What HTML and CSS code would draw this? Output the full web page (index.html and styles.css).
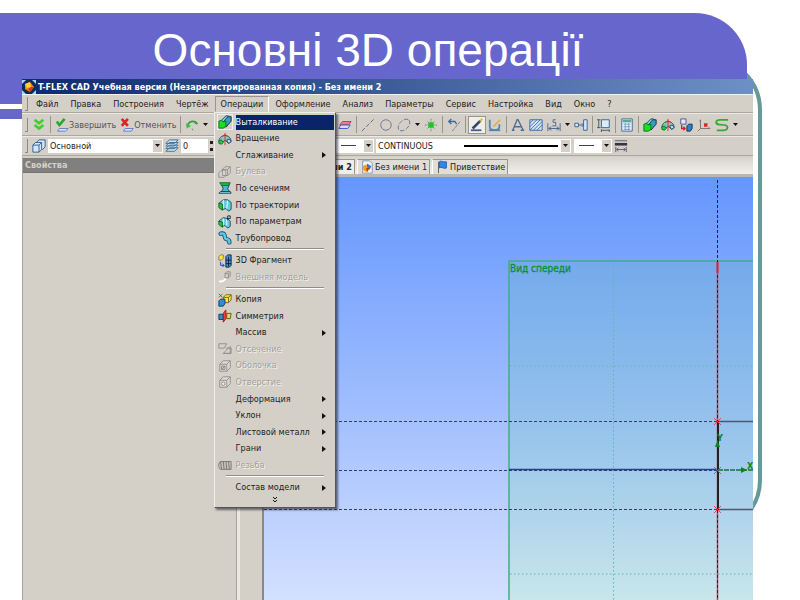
FILE: index.html
```html
<!DOCTYPE html>
<html lang="uk">
<head>
<meta charset="utf-8">
<title>Основні 3D операції</title>
<link rel="stylesheet" href="styles.css">
</head>
<body>
<svg class="defs" aria-hidden="true">
  <symbol id="extrude" viewBox="0 0 16 16"><path d="M6 7 11 2h4v5l-6 7" fill="#36a0b8" stroke="#123" stroke-width="1"/><path d="M4 6 9 1h3L6 8z" fill="#7fd4d8" stroke="#164050"/><path d="M1 7l3-1 2 2 3-1v6l-3 2H1z" fill="#1de01d" stroke="#0a6a20"/></symbol>
  <symbol id="revolve" viewBox="0 0 16 16"><path d="M1 11c0-4 3-7 7-7s7 3 7 7l-3 2-3-3H7l-3 3z" fill="#8fc4b8" stroke="#245"/><path d="M1 10l3-1 2 3-2 2-3-1z" fill="#1fd42a" stroke="#164"/><path d="M10 9l3-1 2 3-3 2z" fill="#cde" stroke="#246"/><path d="M8 1v14M5 5l3-2 3 2" stroke="#e02828" fill="none"/></symbol>
  <symbol id="caret" viewBox="0 0 6 4"><path d="M0 0h5L2.500 3z" fill="#111"/></symbol>
  <symbol id="box" viewBox="0 0 16 16"><path d="M2 6l4-4h8v8l-4 4H2zM2 6h8v8M10 6l4-4" fill="#dcd9d3" stroke="#8d8b88"/></symbol>
</svg>

<div class="slide">
  <div class="frame"></div>
  <div class="band"></div>
  <header class="heading"><h1>Основні 3D операції</h1></header>

  <main class="app">
    <div class="titlebar">
      <svg viewBox="0 0 14 14"><path d="M0 0h14v14H0z" fill="#9fd8f0"/><path d="M0 4 4 0h6l4 4v6l-4 4H4l-4-4z" fill="#102a58"/><path d="M3 4l5-2 4 5-4 5-5-3z" fill="#f08a18"/><path d="M3 4l5-2 1 5-4 1z" fill="#ffd23c"/><path d="M9 7l3 0-4 5-2-3z" fill="#d83a10"/></svg>
      <span>T-FLEX CAD Учебная версия (Незарегистрированная копия) - Без имени 2</span>
    </div>

    <nav class="menubar">
      <i class="grip"></i>
      <button>Файл</button><button>Правка</button><button>Построения</button><button>Чертёж</button>
      <div class="menu-root">
        <button class="open">Операции</button>
        <div class="dropdown">
          <div class="list">
            <button class="item current"><svg class="raised"><use href="#extrude"/></svg><span>Выталкивание</span></button>
            <button class="item"><svg><use href="#revolve"/></svg><span>Вращение</span></button>
            <button class="item sub"><i></i><span>Сглаживание</span></button>
            <button class="item" disabled><svg viewBox="0 0 16 16"><path d="M5 5l3-3h6v7l-3 3H5zM1 9l3-3h5v6l-2 2H1z" fill="#d9d6d0" stroke="#8d8b88"/><path d="M5 5h6v7M11 5l3-3" fill="none" stroke="#8d8b88"/></svg><span>Булева</span></button>
            <button class="item"><svg viewBox="0 0 16 16"><path d="M4 4h9l-2 5 3 4H3l3-4z" fill="#49b8d0" stroke="#123c50"/><path d="M2 2h12l-2 3H4z" fill="#18c848" stroke="#0a5a28"/><path d="M3 12h11l1 2H1z" fill="#8fdcea" stroke="#123c50"/></svg><span>По сечениям</span></button>
            <button class="item"><svg viewBox="0 0 16 16"><path d="M1 6l5-4 5 0 4 3v8l-3 2-3-3-3 1z" fill="#6cc9de" stroke="#12465c"/><path d="M6 2v10M11 3l-1 9" stroke="#fff" fill="none"/><path d="M1 6l4 1v7l-4-3z" fill="#1cd02c" stroke="#0a5a28"/></svg><span>По траектории</span></button>
            <button class="item"><svg viewBox="0 0 16 16"><path d="M1 7l5-4 5 1 3 3v6l-3 2-3-3-3 1z" fill="#6cc9de" stroke="#12465c"/><path d="M6 4v8M10 5v7" stroke="#fff"/><path d="M1 7l4 1v6l-4-3z" fill="#1cd02c" stroke="#0a5a28"/><path d="M11 6V1h3v3h-3" fill="none" stroke="#123"/></svg><span>По параметрам</span></button>
            <button class="item"><svg viewBox="0 0 16 16"><path d="M3 3c7-1 3 4 6 6 2 1 4 0 4 4" fill="none" stroke="#124f70" stroke-width="5" stroke-linecap="round"/><path d="M3 3c7-1 3 4 6 6 2 1 4 0 4 4" fill="none" stroke="#5fc8e4" stroke-width="3" stroke-linecap="round"/></svg><span>Трубопровод</span></button>
            <hr>
            <button class="item"><svg viewBox="0 0 16 16"><path d="M1 3l2-2h3v4l-2 2H1z" fill="#ffe638" stroke="#775"/><path d="M3 9v4h4M5 11l2 2-2 2" fill="none" stroke="#1830b8"/><path d="M9 3l2-2h4v12l-2 2H9z" fill="#3a9bd0" stroke="#113"/><path d="M9 7h6M9 11h6M12 3v11" stroke="#113"/></svg><span>3D Фрагмент</span></button>
            <button class="item" disabled><svg viewBox="0 0 16 16"><path d="M8 4l2-2h4v5l-2 2H8zM8 4h4v5" fill="#d0cdc8" stroke="#8d8b88"/><path d="M1 13h4l4-3" stroke="#fff" stroke-width="2" fill="none"/></svg><span>Внешняя модель</span></button>
            <hr>
            <button class="item"><svg viewBox="0 0 16 16"><path d="M6 5l3-3h6v6l-3 3H6z" fill="#ffe93a" stroke="#665c10"/><path d="M6 5h6v6M12 5l3-3" fill="none" stroke="#665c10"/><path d="M1 9l2-2h5v5l-2 3H1z" fill="#2e8fcc" stroke="#0d3560"/><path d="M1 1l4 4M1 5l4-4" stroke="#e02020"/></svg><span>Копия</span></button>
            <button class="item"><svg viewBox="0 0 16 16"><path d="M1 6h5v6H1z" fill="#2e8fcc" stroke="#0d3560"/><path d="M10 5h5l-1 6h-4z" fill="#e6d858" stroke="#4c5510"/><path d="M6 5l3-4v10l-3 4z" fill="#f04040" stroke="#a01010"/></svg><span>Симметрия</span></button>
            <button class="item sub"><i></i><span>Массив</span></button>
            <button class="item" disabled><svg viewBox="0 0 16 16"><path d="M1 2h9l-3 5H1zM6 13l8-8v8zM9 7h6v6H6" fill="#d5d2cc" stroke="#8d8b88"/></svg><span>Отсечение</span></button>
            <button class="item" disabled><svg viewBox="0 0 16 16"><use href="#box"/><path d="M4 8h4v4H4zM4 12l4-4" fill="#c4c1bc" stroke="#8d8b88"/></svg><span>Оболочка</span></button>
            <button class="item" disabled><svg viewBox="0 0 16 16"><use href="#box"/><circle cx="6" cy="10" r="2" fill="#eee" stroke="#8d8b88"/></svg><span>Отверстие</span></button>
            <button class="item sub"><i></i><span>Деформация</span></button>
            <button class="item sub"><i></i><span>Уклон</span></button>
            <button class="item sub"><i></i><span>Листовой металл</span></button>
            <button class="item sub"><i></i><span>Грани</span></button>
            <button class="item" disabled><svg viewBox="0 0 16 16"><path d="M3 4h12v9H3c-3-1-3-8 0-9z" fill="#c9c6c0" stroke="#77756f"/><path d="M3 4l1 9M6 4l1 9M9 4l1 9M12 4l1 9" stroke="#6f6d68"/></svg><span>Резьба</span></button>
            <hr>
            <button class="item sub"><i></i><span>Состав модели</span></button>
          </div>
          <button class="more" aria-label="Ещё"><svg viewBox="0 0 6 8"><path d="M1 1l2 2 2-2M1 4l2 2 2-2" fill="none" stroke="#111"/></svg></button>
        </div>
      </div>
      <button>Оформление</button><button>Анализ</button><button>Параметры</button><button>Сервис</button><button>Настройка</button><button>Вид</button><button>Окно</button><button>?</button>
    </nav>

    <div class="toolbar">
      <div class="lead">
        <i class="grip"></i>
        <button class="tool"><svg viewBox="0 0 16 16"><path d="M3 2l5 4 5-4M3 8l5 4 5-4" fill="none" stroke="#3fd02f" stroke-width="3"/></svg></button>
        <i class="sep"></i>
        <button class="wide"><svg viewBox="0 0 16 16"><path d="M5 12h10l-3 3H3z" fill="#dbe6fb" stroke="#5873c8"/><path d="M2 4l3 4 6-7" fill="none" stroke="#27a82a" stroke-width="3"/></svg>Завершить</button>
        <button class="wide"><svg viewBox="0 0 16 16"><path d="M6 12h9l-2 3H4z" fill="#dbe6fb" stroke="#5873c8"/><path d="M2 1l7 8M9 1 2 9" fill="none" stroke="#d82626" stroke-width="3"/></svg>Отменить</button>
        <i class="sep"></i>
        <button class="tool"><svg viewBox="0 0 16 16"><path d="M3 8c3-6 9-5 11-1M14 7l-3-2" fill="none" stroke="#3a9c3e" stroke-width="2"/><path d="M1 6l1 6 5-3z" fill="#3cc044"/><path d="M8 12l1 2" stroke="#3a9c3e"/></svg></button>
        <button class="drop"><svg><use href="#caret"/></svg></button>
      </div>
      <button class="tool"><svg viewBox="0 0 16 16"><path d="M5 4h10l-3 4H2z" fill="#e8808c" stroke="#c83040"/><path d="M3 8h11l-3 4H1z" fill="#cfe0ff" stroke="#2a50c0"/></svg></button>
      <i class="sep"></i>
      <button class="tool"><svg viewBox="0 0 16 16"><path d="M1 15 15 1" stroke="#55647c" stroke-dasharray="5 2"/></svg></button>
      <button class="tool"><svg viewBox="0 0 16 16"><circle cx="8" cy="8" r="6" fill="none" stroke="#65748c"/></svg></button>
      <button class="tool"><svg viewBox="0 0 16 16"><ellipse cx="8" cy="8" rx="8" ry="5" transform="rotate(-45 8 8)" fill="none" stroke="#65748c" stroke-dasharray="5 2"/></svg></button>
      <button class="drop"><svg><use href="#caret"/></svg></button>
      <button class="tool"><svg viewBox="0 0 16 16"><path d="M1 8h14M8 1v14" stroke="#4a9a58" stroke-dasharray="2 1"/><path d="M4 4l8 8M12 4l-8 8" stroke="#3aa848"/><path d="M5 5h6v6H5z" fill="#1cc42a"/></svg></button>
      <i class="sep"></i>
      <button class="tool"><svg viewBox="0 0 16 16"><path d="M2 4h7l2 3M5 1 2 4l3 3" fill="none" stroke="#41669c" stroke-width="1.500"/><path d="M6 15 15 4" stroke="#6a7c94" stroke-dasharray="4 1"/></svg></button>
      <i class="sep"></i>
      <button class="tool pressed"><svg viewBox="0 0 16 16"><path d="M1 13h12v2H1z" fill="#3c5d96"/><path d="M3 12 12 3" stroke="#30466f" stroke-width="3"/><path d="M11 4l3-3" stroke="#d3b13c" stroke-width="2"/></svg></button>
      <button class="tool"><svg viewBox="0 0 16 16"><path d="M2 2v8c0 5 11 5 11 0V7" fill="none" stroke="#4f86b4" stroke-width="2"/><path d="M1 14h13" stroke="#4f86b4" stroke-width="2"/><path d="M6 10l8-8" stroke="#dcae58" stroke-width="2"/></svg></button>
      <i class="sep"></i>
      <button class="tool"><svg viewBox="0 0 16 16"><path d="M2 14 7 2h1l6 12M4 10h8M1 14h3M11 14h4" fill="none" stroke="#4e6b92" stroke-width="1.500"/></svg></button>
      <button class="tool"><svg viewBox="0 0 16 16"><path d="M1 2h14v12H1z" fill="#d7e6f6" stroke="#2e62a8"/><path d="M1 6l4-4M1 10l8-8M1 14 13 2M5 14 15 4M9 14l6-6" stroke="#2e62a8"/></svg></button>
      <button class="tool"><svg viewBox="0 0 16 16"><path d="M1 6v9M15 6v9M2 12h12M5 10l-3 2 3 2M11 10l3 2-3 2M10 2H7v3h3v4H6" fill="none" stroke="#41608c"/></svg></button>
      <button class="drop"><svg><use href="#caret"/></svg></button>
      <button class="tool"><svg viewBox="0 0 16 16"><path d="M1 6h4v4H1zM5 8h6M9 6l2 2-2 2M11 2h4v12h-4z" fill="#d9ecfa" stroke="#2b5794"/></svg></button>
      <i class="sep"></i>
      <button class="tool"><svg viewBox="0 0 16 16"><path d="M5 2h9v9H5z" fill="#d9ecfa" stroke="#2b5794"/><path d="M2 2v9M0 2h4M0 11h4M5 13v3M14 13v3M5 14h9" stroke="#38506c"/></svg></button>
      <i class="sep"></i>
      <button class="tool"><svg viewBox="0 0 16 16"><path d="M2 1h12v14H2z" fill="#eaf4fc" stroke="#38618e"/><path d="M3 2h10v3H3z" fill="#5aa892"/><path d="M4 7h8M4 10h8M4 13h8M6 6v8M10 6v8" stroke="#6f95bd"/></svg></button>
      <i class="sep"></i>
      <button class="tool"><svg><use href="#extrude"/></svg></button>
      <button class="tool"><svg><use href="#revolve"/></svg></button>
      <button class="tool"><svg viewBox="0 0 16 16"><path d="M2 1h6v6H2z" fill="#d9ecfa" stroke="#2b5794"/><path d="M3 8v4h4M5 10l2 2-2 2" fill="none" stroke="#e02020" stroke-width="1.500"/><path d="M9 9l2-2h4v5l-2 3H9z" fill="#2e7fc4" stroke="#0d2d58"/></svg></button>
      <button class="tool"><svg viewBox="0 0 16 16"><path d="M4 2v10h11M4 12l-3 3M4 2 3 4M15 12l-2-1" fill="none" stroke="#7a6a6a"/><path d="M8 6h4v4H8z" fill="#d82828"/></svg></button>
      <button class="tool"><svg viewBox="0 0 16 16"><path d="M15 2H6C0 2 0 7 5 7.500l6 .5c5 1 4 6-1 6H2" fill="none" stroke="#36a836" stroke-width="2"/></svg></button>
      <button class="drop"><svg><use href="#caret"/></svg></button>
    </div>

    <div class="toolbar props">
      <div class="lead">
        <i class="grip"></i>
        <button class="tool"><svg viewBox="0 0 16 16"><path d="M5 4l3-3h7v8l-3 3H5z" fill="#d3e8f8" stroke="#29548a"/><path d="M1 7l3-3h7v8l-3 3H1z" fill="#d3e8f8" stroke="#29548a"/><path d="M1 7h7v8M8 7l3-3" fill="none" stroke="#29548a"/></svg></button>
        <label class="combo level"><select aria-label="Уровень"><option>Основной</option></select><i class="arrow"><svg><use href="#caret"/></svg></i></label>
        <button class="tool"><svg viewBox="0 0 16 16"><path d="M1 14l4-4h10l-4 4zM1 11l4-4h10l-4 4zM1 8l4-4h10l-4 4zM1 5l4-4h10l-4 4z" fill="#c9e2f2" stroke="#386890"/></svg></button>
        <input class="num" type="text" value="0" aria-label="Слой">
        <i class="spin"></i>
      </div>
      <label class="combo short"><select aria-label="Начало линии"><option></option></select><i class="thin"></i><i class="arrow"><svg><use href="#caret"/></svg></i></label>
      <label class="combo line"><select aria-label="Тип линии"><option>CONTINUOUS</option></select><i class="thick"></i><i class="arrow"><svg><use href="#caret"/></svg></i></label>
      <label class="combo short"><select aria-label="Конец линии"><option></option></select><i class="thin"></i><i class="arrow"><svg><use href="#caret"/></svg></i></label>
      <button class="tool"><svg viewBox="0 0 16 16"><path d="M1 2h14" stroke="#556"/><path d="M1 6h14" stroke="#334" stroke-width="3"/><path d="M2 9v6M14 9v6M3 12h10M5 10l-2 2 2 2M11 10l2 2-2 2" fill="none" stroke="#556"/></svg></button>
    </div>

    <div class="work">
      <aside class="panel"><h2>Свойства</h2></aside>
      <div class="gutter"></div>
      <section class="doc">
        <div class="tabs">
          <button class="tab active">Без имени 2</button>
          <button class="tab"><svg viewBox="0 0 16 16"><path d="M3 1h8l3 3v11H3z" fill="#eef4fb" stroke="#7a94ae"/><path d="M3 7l4-2 4 4-3 5-4-2z" fill="#f0a020"/><path d="M8 4l5 3-2 4-3-3z" fill="#3a78d8"/><path d="M7 9l4 0-3 5z" fill="#d03020"/></svg>Без имени 1</button>
          <button class="tab"><svg viewBox="0 0 16 16"><path d="M4 2v13" stroke="#555"/><path d="M5 2c2-2 4 1 8 0v7c-3 2-5-2-8 0z" fill="#2f86e8" stroke="#1758b0"/></svg>Приветствие</button>
        </div>
        <svg class="canvas" viewBox="264 177 489 423" preserveAspectRatio="xMinYMin slice">
          <defs>
            <linearGradient id="sky" x2="0" y2="1"><stop offset="0" stop-color="#6496fd"/><stop offset="1" stop-color="#d3e0ff"/></linearGradient>
            <linearGradient id="sheet" x2="0" y2="1"><stop offset="0" stop-color="#74aaec"/><stop offset=".5" stop-color="#97c4ec"/><stop offset=".8" stop-color="#b5d8eb"/><stop offset="1" stop-color="#c8e6ea"/></linearGradient>
          </defs>
          <rect x="264" y="177" width="489" height="423" fill="url(#sky)"/>
          <rect x="509" y="261" width="245" height="340" fill="url(#sheet)"/>
          <path d="M509 600V261h244" fill="none" stroke="#3faf80" stroke-width="1.500"/>
          <path d="M613.500 262v338M510 366h243M510 574h243" stroke="#5ab8a8" stroke-dasharray="1.500 2.500"/>
          <path d="M264 421.500h454M264 470.500h454M264 509.500h454" stroke="#32405f" stroke-dasharray="3 2"/>
          <path d="M509 469.500h209" stroke="#2638b8" stroke-width="1.500"/>
          <path d="M717.500 262v338" stroke="#c04858" stroke-width="1.500"/>
          <path d="M717.500 180v420" stroke="#1d2038" stroke-dasharray="3 2"/>
          <path d="M717.500 262v11" stroke="#e02038" stroke-width="2"/>
          <path d="M753 421.500h-35v88h35" fill="none" stroke="#4c5a70" stroke-width="1.500"/>
          <path d="M718 421v89" stroke="#222" stroke-width="2"/>
          <path d="M718 470h35" stroke="#157048" stroke-width="1.500" stroke-dasharray="5 1"/>
          <path d="M714 418l7 7M721 418l-7 7M714 467l7 7M721 467l-7 7M714 506l7 7M721 506l-7 7" stroke="#e04858"/>
          <path d="M715 447l2.500-7 2.500 7zM741 467l6 3-6 3z" fill="#0a8424"/>
          <text class="axis" x="717" y="441">Y</text><text class="axis" x="747" y="469">X</text>
          <text class="view" x="510" y="272">Вид спереди</text>
        </svg>
      </section>
    </div>
  </main>
</div>
</body>
</html>
```

FILE: styles.css
```css
* { box-sizing: border-box; }

body {
  margin: 0;
  background: #fff;
  color: #222;
  font: 9px/12px "DejaVu Sans Condensed", "DejaVu Sans", sans-serif;
}

button, input, select {
  margin: 0;
  padding: 0;
  border: 0;
  border-radius: 0;
  background: none;
  color: inherit;
  font: inherit;
  appearance: none;
}

button { white-space: nowrap; }
svg { display: block; flex: none; }
.defs { position: absolute; width: 0; height: 0; }

.slide {
  position: relative;
  display: flex;
  flex-direction: column;
  min-height: 100vh;
  overflow: hidden;
}

.band {
  position: absolute;
  top: 13px;
  left: 0;
  right: 53px;
  height: 106px;
  border-radius: 0 52px 0 0;
  background: linear-gradient(#6666cc 91px, #fff 91px, #fff 96px, #6666cc 96px);
  clip-path: polygon(0 0, 100% 0, 100% 70px, 50% 70px, 50% 100%, 0 100%);
}

.frame {
  position: absolute;
  top: 56px;
  right: 38px;
  width: 50%;
  height: 478px;
  border: 4px solid #669999;
  border-radius: 54px;
  clip-path: inset(14px 0 0 80%);
}

.heading {
  position: relative;
  padding: 22px 64px 1px 0;
}

h1 {
  margin: 0;
  color: #fff;
  font: 46px/56px "Liberation Sans", sans-serif;
  text-align: center;
}

.app {
  position: relative;
  flex: 1;
  display: flex;
  flex-direction: column;
  margin: 0 47px 0 22px;
  background: #d4d0c8;
}

.titlebar {
  display: flex;
  align-items: center;
  gap: 2px;
  height: 15px;
  background: linear-gradient(90deg, #0d2a6c, #6d90c4);
  color: #fff;
  font-weight: bold;
  white-space: nowrap;
}
.titlebar svg { width: 14px; height: 14px; }

.menubar {
  display: flex;
  align-items: center;
  height: 19px;
  padding: 1px 1px 0;
  border-top: 1px solid #f4f2ee;
  border-bottom: 1px solid #aaa79f;
}
.menubar > button, .open { height: 16px; padding: 0 5px; border: 1px solid transparent; }
.menubar .open { border-color: #98958e #fff #d4d0c8 #98958e; }

.grip {
  width: 3px;
  height: 14px;
  margin: 0 2px;
  border-right: 1px solid #8e8b84;
  border-bottom: 1px solid #8e8b84;
}

.menu-root { position: relative; }

.dropdown {
  position: absolute;
  z-index: 5;
  top: 16px;
  left: -1px;
  width: 122px;
  padding: 1px;
  border: 1px solid #f2f0ec;
  border-right-color: #555;
  border-bottom-color: #555;
  background: #d4d0c8;
  box-shadow: 2px 2px 2px rgba(30, 30, 40, .6);
}
.list { display: flex; flex-direction: column; height: 382px; }
.item {
  flex: 1;
  display: grid;
  grid-template-columns: 20px 1fr 12px;
  align-items: center;
  text-align: left;
}
.item svg { width: 14px; height: 14px; margin-left: 2px; }
.item span { line-height: 15px; }
.item .raised { outline: 1px solid #f0eee8; }
.current span { grid-column: 2 / 4; background: #0a246a; color: #fff; }
.sub::after {
  content: "";
  width: 4px;
  border-left: 4px solid #111;
  border-top: 3px solid transparent;
  border-bottom: 3px solid transparent;
}
.item:disabled { color: #a3a09a; text-shadow: 1px 1px #f4f2ee; }
.list hr {
  width: 98px;
  height: 2px;
  margin: 2px 8px 2px 10px;
  border: 0;
  border-top: 1px solid #908d86;
  border-bottom: 1px solid #fff;
}
.more { display: flex; justify-content: center; width: 100%; height: 10px; }
.more svg { width: 6px; height: 8px; }

.toolbar {
  display: flex;
  align-items: center;
  height: 23px;
  border-bottom: 1px solid #aaa79f;
  border-top: 1px solid #eceae5;
}
.lead { display: flex; align-items: center; width: 314px; padding-left: 1px; flex: none; }
.tool {
  display: flex;
  align-items: center;
  justify-content: center;
  width: 18px;
  height: 18px;
  flex: none;
}
.tool svg { width: 14px; height: 14px; }
.pressed { background: #f0eee9; border: 1px solid #98958e; }
.wide { display: flex; align-items: center; color: #555; padding: 0 2px; }
.wide svg { width: 14px; height: 14px; }
.sep { width: 1px; height: 17px; margin: 0 2px; background: #98958e; flex: none; }
.drop { display: flex; align-items: center; justify-content: center; width: 9px; height: 18px; flex: none; }
.drop svg, .arrow svg { width: 6px; height: 4px; }

.props { height: 20px; }
.combo { position: relative; display: block; height: 14px; background: #fff; }
.combo select { display: block; width: 100%; height: 14px; padding-left: 2px; }
.combo i { position: absolute; pointer-events: none; }
.combo .arrow {
  top: 1px;
  right: 1px;
  display: flex;
  align-items: center;
  justify-content: center;
  width: 9px;
  height: 12px;
  background: #d4d0c8;
}
.level { width: 115px; }
.short { width: 38px; }
.line { width: 195px; margin: 0 3px 0 2px; }
.thin { left: 5px; top: 6px; width: 15px; border-top: 1px solid #444; }
.thick { right: 13px; top: 6px; width: 94px; border-top: 2px solid #000; }
.num { width: 27px; height: 14px; padding-left: 2px; background: #fff; }
.spin {
  width: 6px;
  height: 10px;
  margin-left: 2px;
  background: linear-gradient(#222 3px, transparent 3px, transparent 7px, #222 7px) no-repeat 0 0 / 3px 10px;
}

.work { flex: 1; display: flex; margin-top: 1px; }
.panel { width: 215px; flex: none; border-left: 1px solid #a5a29b; border-right: 1px solid #a5a29b; }
.panel h2 {
  margin: 1px 0 0;
  padding-left: 2px;
  height: 15px;
  border-bottom: 1px solid #77746e;
  background: #808080;
  color: #d4d0c8;
  font: bold 9px/14px "DejaVu Sans Condensed", "DejaVu Sans", sans-serif;
}
.gutter {
  width: 27px;
  flex: none;
  border-left: 3px solid #ece9e3;
  border-right: 2px solid #8a8882;
}
.doc { flex: 1; min-width: 0; display: flex; flex-direction: column; }
.tabs {
  display: flex;
  align-items: flex-end;
  gap: 2px;
  height: 20px;
  border-bottom: 3px solid #bab7b0;
  background: linear-gradient(#d6d3cc, #f2f0ec);
}
.tab {
  display: flex;
  align-items: center;
  gap: 1px;
  height: 15px;
  padding: 0 2px;
  border: 1px solid #98958e;
  border-left-color: #fff;
  border-bottom: 0;
  background: #e0ddd6;
}
.tab svg { width: 14px; height: 14px; }
.active { justify-content: flex-end; width: 91px; background: #f0eee9; font-weight: bold; }
.canvas { flex: 1; width: 100%; min-height: 0; }
.axis { font: bold 9px "DejaVu Sans Condensed", sans-serif; fill: #0a8424; }
.view { font: 10px "DejaVu Sans Condensed", sans-serif; fill: #0a9030; stroke: #0a9030; stroke-width: .3px; }
```
